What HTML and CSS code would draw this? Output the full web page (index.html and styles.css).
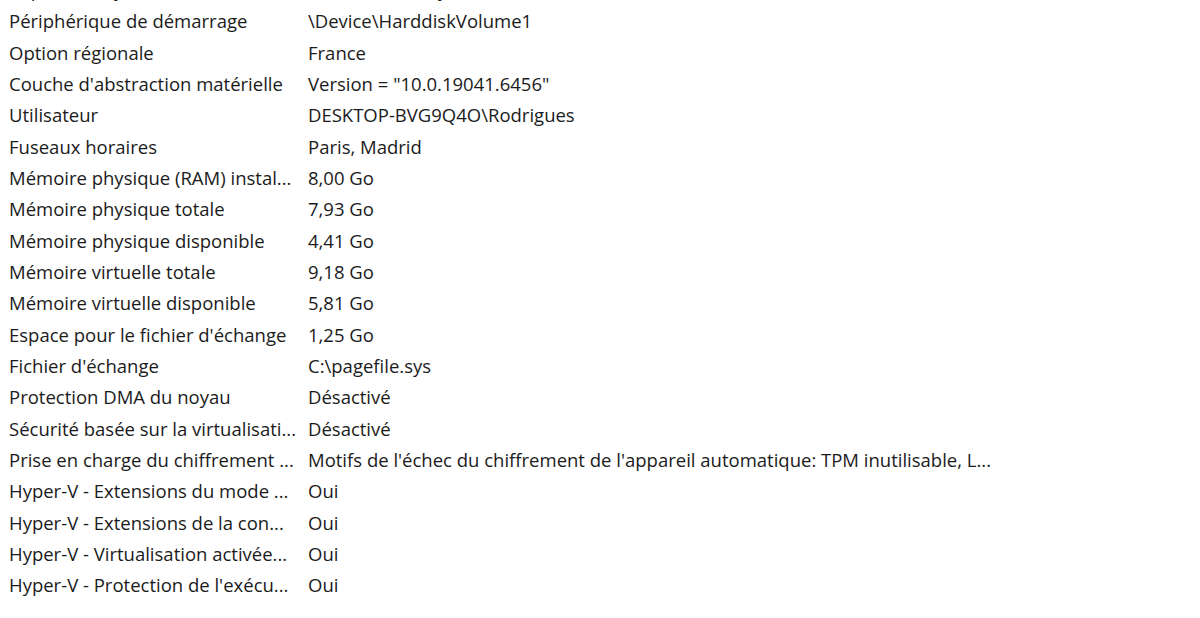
FILE: index.html
```html
<!DOCTYPE html>
<html lang="fr">
<head>
<meta charset="utf-8">
<title>Informations système</title>
<link rel="stylesheet" href="styles.css">
</head>
<body>
<div class="list">
  <div class="row"><span class="k">Répertoire système</span><span class="v">C:\WINDOWS\system32</span></div>
  <div class="row"><span class="k">Périphérique de démarrage</span><span class="v">\Device\HarddiskVolume1</span></div>
  <div class="row"><span class="k">Option régionale</span><span class="v">France</span></div>
  <div class="row"><span class="k">Couche d'abstraction matérielle</span><span class="v">Version = "10.0.19041.6456"</span></div>
  <div class="row"><span class="k">Utilisateur</span><span class="v">DESKTOP-BVG9Q4O\Rodrigues</span></div>
  <div class="row"><span class="k">Fuseaux horaires</span><span class="v">Paris, Madrid</span></div>
  <div class="row"><span class="k">Mémoire physique (RAM) instal...</span><span class="v">8,00 Go</span></div>
  <div class="row"><span class="k">Mémoire physique totale</span><span class="v">7,93 Go</span></div>
  <div class="row"><span class="k">Mémoire physique disponible</span><span class="v">4,41 Go</span></div>
  <div class="row"><span class="k">Mémoire virtuelle totale</span><span class="v">9,18 Go</span></div>
  <div class="row"><span class="k">Mémoire virtuelle disponible</span><span class="v">5,81 Go</span></div>
  <div class="row"><span class="k">Espace pour le fichier d'échange</span><span class="v">1,25 Go</span></div>
  <div class="row"><span class="k">Fichier d'échange</span><span class="v">C:\pagefile.sys</span></div>
  <div class="row"><span class="k">Protection DMA du noyau</span><span class="v">Désactivé</span></div>
  <div class="row"><span class="k">Sécurité basée sur la virtualisati...</span><span class="v">Désactivé</span></div>
  <div class="row"><span class="k">Prise en charge du chiffrement ...</span><span class="v">Motifs de l'échec du chiffrement de l'appareil automatique: TPM inutilisable, L...</span></div>
  <div class="row"><span class="k">Hyper-V - Extensions du mode ...</span><span class="v">Oui</span></div>
  <div class="row"><span class="k">Hyper-V - Extensions de la con...</span><span class="v">Oui</span></div>
  <div class="row"><span class="k">Hyper-V - Virtualisation activée...</span><span class="v">Oui</span></div>
  <div class="row"><span class="k">Hyper-V - Protection de l'exécu...</span><span class="v">Oui</span></div>
</div>
</body>
</html>
```

FILE: styles.css
```css
html, body {
  margin: 0;
  padding: 0;
  background: #ffffff;
}
body {
  width: 1200px;
  height: 618px;
  overflow: hidden;
  font-family: "Open Sans", "Noto Sans", sans-serif;
  font-size: 18.5px;
  color: #1b1b1b;
}
.list {
  margin-top: -26px;
  padding-left: 9px;
}
.row {
  display: flex;
  height: 31.33px;
  align-items: center;
  white-space: nowrap;
}
.k {
  width: 299px;
  flex: none;
  overflow: hidden;
}
.v {
  flex: none;
}
```
